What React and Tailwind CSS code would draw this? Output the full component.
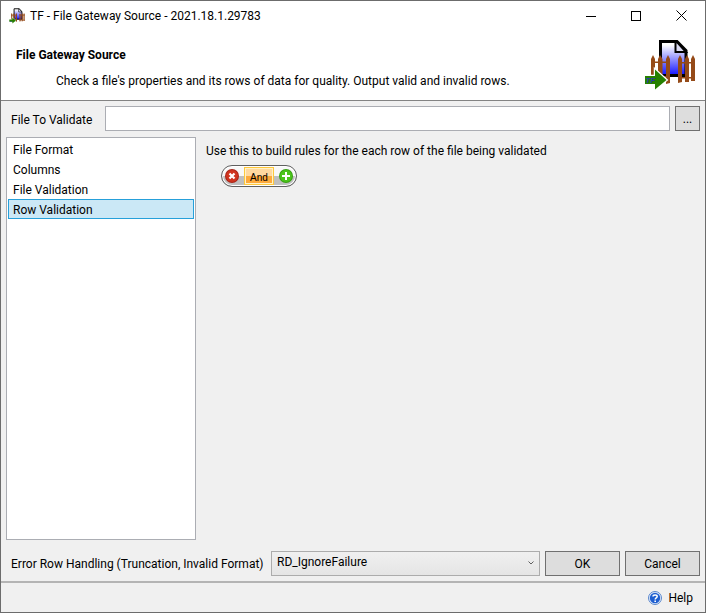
import React, { useState } from "react";

const pages = ["File Format", "Columns", "File Validation", "Row Validation"];

const GatewayIcon = ({ className, id }) => (
  <svg viewBox="0 0 52 52" className={className} aria-hidden="true">
    <defs>
      <linearGradient id={id} x1="0" y1="0" x2="0" y2="1">
        <stop offset="0.1" stopColor="#ffffff" />
        <stop offset="1" stopColor="#1010ff" />
      </linearGradient>
    </defs>
    <path d="M16.5 2.5H33L42 11.5V36.5H16.5Z" fill={`url(#${id})`} stroke="#000" strokeWidth="3" />
    <path d="M31.5 3V13H42L33 3Z" fill="#dcdcf4" stroke="#000" strokeWidth="2" />
    <g fill="#954a18">
      <path d="M7 43V20L9 16L11 20V43Z" />
      <path d="M14 43V20L16 16L18.500 20V43Z" />
      <path d="M22 45V20L24 16L26 20V44Z" />
      <path d="M34 44V20L36 16L38 20V43Z" />
      <path d="M41 43V20L43 16L45 20V43Z" />
      <path d="M47 42V20L49 16L51 20V42Z" />
      <path d="M7 22.500H26V24H7ZM7 37H26V38.500H7ZM34 23H51V24.500H34ZM34 38H51V39.500H34Z" />
    </g>
    <path d="M1 37H11V30.500L22.500 41L11 50.500V45H1Z" fill="#268000" stroke="#fff" strokeWidth="2.500" paintOrder="stroke" />
    <text x="1.500" y="44" fontSize="8" fontStyle="italic" fontWeight="bold" fontFamily="Liberation Sans, sans-serif" fill="#2c3ca8">
      TF
    </text>
  </svg>
);

const App = () => {
  const [page, setPage] = useState("Row Validation");

  return (
    <div className="min-h-screen flex flex-col bg-[#f0f0f0] border border-[#6c6c6c] text-black text-[12px] leading-4 font-['Roboto',sans-serif]">
      {/* Title bar */}
      <div className="h-[30px] shrink-0 flex items-center bg-white pl-2 pr-[2px]">
        <GatewayIcon id="doc-small" className="w-4 h-4" />
        <h1 className="ml-[5px] flex-1">TF - File Gateway Source - 2021.18.1.29783</h1>
        <button aria-label="Minimize" className="w-[45px] h-full flex items-center justify-center">
          <svg width="10" height="10" stroke="#000" shapeRendering="crispEdges">
            <path d="M0 5.500H10" />
          </svg>
        </button>
        <button aria-label="Maximize" className="w-[45px] h-full flex items-center justify-center">
          <svg width="10" height="10" stroke="#000" fill="none" shapeRendering="crispEdges">
            <path d="M0.500 0.500H9.500V9.500H0.500Z" />
          </svg>
        </button>
        <button aria-label="Close" className="w-[45px] h-full flex items-center justify-center">
          <svg width="12" height="12" stroke="#000">
            <path d="M1.500 0.500L11.500 10.500M11.500 0.500L1.500 10.500" />
          </svg>
        </button>
      </div>

      {/* Header */}
      <header className="h-[70px] shrink-0 flex justify-between bg-white border-b border-[#838383] pl-[15px] pr-[9px] pt-2">
        <div className="pt-2">
          <h2 className="font-bold">File Gateway Source</h2>
          <p className="mt-[10px] ml-10">
            Check a file's properties and its rows of data for quality. Output valid and invalid rows.
          </p>
        </div>
        <GatewayIcon id="doc-large" className="w-[52px] h-[52px] shrink-0" />
      </header>

      <main className="flex-1 flex flex-col p-[5px]">
        {/* File picker */}
        <div className="flex items-center gap-[5px]">
          <label htmlFor="file" className="w-[94px] shrink-0 pl-[5px] pt-[2px] whitespace-nowrap">
            File To Validate
          </label>
          <input id="file" type="text" className="flex-1 min-w-0 h-[25px] px-1 bg-white border border-[#abadb3] outline-none" />
          <button aria-label="Browse" className="w-[25px] h-[25px] bg-[#dddddd] border border-[#707070]">
            ...
          </button>
        </div>

        <div className="flex-1 flex gap-[10px] mt-[6px]">
          <nav className="w-[190px] shrink-0 bg-white border border-[#abadb3] px-px py-px">
            {pages.map((name) => (
              <button
                key={name}
                onClick={() => setPage(name)}
                className={`block w-full h-5 px-1 pt-px text-left border ${
                  page === name ? "bg-[#cbe8f6] border-[#26a0da]" : "border-transparent"
                }`}
              >
                {name}
              </button>
            ))}
          </nav>

          {/* Rule builder */}
          <section className="pt-[6px]">
            <p>Use this to build rules for the each row of the file being validated</p>
            <div className="w-[76px] h-[22px] mt-[6px] ml-[15px] px-[3px] flex items-center justify-between rounded-full border border-[#606060] bg-linear-to-b from-[#f8f8f8] from-50% to-[#bfbfbf] to-50% shadow-[inset_0_0_0_1px_#ffffff]">
              <button aria-label="Remove rule">
                <svg width="14" height="14" viewBox="0 0 14 14">
                  <circle cx="7" cy="7" r="7" fill="#a92318" />
                  <circle cx="7" cy="7" r="6" fill="#d0351f" />
                  <path d="M4.500 4.500L9.500 9.500M9.500 4.500L4.500 9.500" stroke="#fff" strokeWidth="2.200" />
                </svg>
              </button>
              <button className="w-[30px] h-[18px] pt-1 text-[10px] leading-3 border border-[#ffc83c] shadow-[inset_0_0_0_1px_#fff2c8] bg-linear-to-b from-[#ffd9a0] from-50% to-[#fdaa3c] to-50% font-['Liberation_Sans',sans-serif]">
                And
              </button>
              <button aria-label="Add rule">
                <svg width="14" height="14" viewBox="0 0 14 14">
                  <circle cx="7" cy="7" r="7" fill="#36a010" />
                  <circle cx="7" cy="7" r="6" fill="#4cc41c" />
                  <path d="M7 3V11M3 7H11" stroke="#fff" strokeWidth="2" />
                </svg>
              </button>
            </div>
          </section>
        </div>

        <div className="flex items-center gap-[5px] mt-[11px]">
          <label htmlFor="errors" className="w-[260px] shrink-0 pl-[5px] whitespace-nowrap">
            Error Row Handling (Truncation, Invalid Format)
          </label>
          <div className="flex-1 relative">
            <select
              id="errors"
              className="block w-full h-[25px] pl-[5px] pb-[3px] appearance-none border border-[#acacac] bg-linear-to-b from-[#f0f0f0] to-[#e5e5e5]"
            >
              <option>RD_IgnoreFailure</option>
            </select>
            <svg className="absolute right-[6px] top-[9px] pointer-events-none" width="6" height="6" fill="none" stroke="#606060">
              <path d="M0.500 1.500L3 4L5.500 1.500" />
            </svg>
          </div>
          <button className="w-[75px] h-[25px] bg-[#dddddd] border border-[#707070]">OK</button>
          <button className="w-[75px] h-[25px] bg-[#dddddd] border border-[#707070]">Cancel</button>
        </div>
      </main>

      {/* Help */}
      <footer className="h-[31px] shrink-0 flex items-center justify-end border-t-2 border-[#b4b4b4] pr-3">
        <a href="#help" className="flex items-center gap-[6px]">
          <svg width="14" height="14" viewBox="0 0 14 14">
            <circle cx="7" cy="7" r="6.500" fill="#e4edfb" stroke="#5a86cc" />
            <circle cx="7" cy="7" r="5.200" fill="#1f5fd0" />
            <path d="M5 5.600C5 3.400 9.200 3.400 9.200 5.600C9.200 7 7.200 6.900 7.200 8.500" fill="none" stroke="#fff" strokeWidth="1.500" />
            <path d="M6.400 9.500H8V11H6.400Z" fill="#fff" />
          </svg>
          Help
        </a>
      </footer>
    </div>
  );
};

export default App;
